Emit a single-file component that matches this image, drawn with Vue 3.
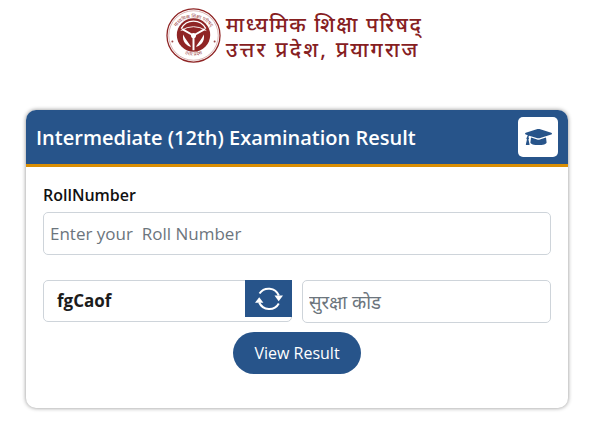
<script setup>
const title = 'Intermediate (12th) Examination Result'
</script>

<template>
  <div class="page">
    <header class="brand">
      <svg class="emblem" viewBox="0 0 56 56" width="55" height="55" aria-hidden="true">
        <defs>
          <path id="arcTop" d="M7 31 A21 21 0 1 1 49 31" />
          <path id="arcBottom" d="M13.5 43 A21.5 21.5 0 0 0 42.5 43" />
        </defs>
        <circle cx="28" cy="28" r="27" fill="#fff" stroke="#8f2525" stroke-width="1.3" />
        <circle cx="28" cy="28" r="25.2" fill="none" stroke="#b56a6a" stroke-width=".5" />
        <text class="ring-text"><textPath href="#arcTop" startOffset="50%" text-anchor="middle">माध्यमिक शिक्षा परिषद्</textPath></text>
        <text class="ring-text"><textPath href="#arcBottom" startOffset="50%" text-anchor="middle">उत्तर प्रदेश</textPath></text>
        <circle cx="6.5" cy="34" r="1" fill="#9c4545" />
        <circle cx="49.5" cy="34" r="1" fill="#9c4545" />
        <circle cx="28" cy="27.5" r="17" fill="#8f2525" />
        <path d="M15.5 21 A14 14 0 0 1 40.5 21" fill="none" stroke="#fff" stroke-width="1.4" />
        <path d="M15 23 Q28 15 41 23" fill="none" stroke="#fff" stroke-width=".9" />
        <path d="M28 28 L28 43 M28 28 L16.5 21.5 M28 28 L39.5 21.5" stroke="#fff" stroke-width="2" fill="none" />
        <circle cx="28" cy="28" r="2.6" fill="#fff" />
        <path d="M17.5 27 C19.5 32 23 35 25.6 39.5 C21.5 39 16 34.5 17.5 27 Z M38.5 27 C36.5 32 33 35 30.4 39.5 C34.5 39 40 34.5 38.5 27 Z" fill="#fff" />
      </svg>
      <div class="brand-text">
        <div>माध्यमिक शिक्षा परिषद्</div>
        <div class="brand-line2">उत्तर प्रदेश, प्रयागराज</div>
      </div>
    </header>

    <section class="card">
      <div class="card-head">
        <h1>{{ title }}</h1>
        <span class="cap-box">
          <svg viewBox="0 0 640 512" width="27" height="22" aria-hidden="true">
            <path fill="#27548a" d="M622.34 153.2L343.4 67.5c-15.2-4.67-31.6-4.67-46.79 0L17.66 153.2c-23.54 7.23-23.54 38.36 0 45.59l48.63 14.94c-10.67 13.19-17.23 29.28-17.88 46.9C38.78 266.15 32 276.11 32 288c0 10.78 5.68 19.85 13.86 25.65L20.33 428.53C18.11 438.52 25.71 448 35.94 448h56.11c10.24 0 17.84-9.48 15.62-19.47L82.14 313.65C90.32 307.85 96 298.78 96 288c0-11.57-6.47-21.25-15.66-26.87.76-15.02 8.44-28.3 20.69-36.72L296.6 284.5c9.06 2.78 26.44 6.25 46.79 0l278.95-85.7c23.55-7.24 23.55-38.36 0-45.6zM352.79 315.09c-28.53 8.76-52.84 3.92-65.59 0l-145.02-44.55L128 384c0 35.35 85.96 64 192 64s192-28.65 192-64l-14.18-113.47-145.03 44.56z" />
          </svg>
        </span>
      </div>

      <form class="card-body" @submit.prevent>
        <label class="field-label" for="roll">RollNumber</label>
        <input id="roll" class="input" type="text" placeholder="Enter your  Roll Number" />

        <div class="captcha-row">
          <div class="captcha">
            <span class="captcha-code">fgCaof</span>
            <button class="refresh" type="button" aria-label="Refresh">
              <svg viewBox="0 0 32 32" width="32" height="32" fill="none" aria-hidden="true">
                <path d="M6.5 10.5 A11 11 0 0 1 25.8 12.5" stroke="#fff" stroke-width="2" />
                <path d="M25.8 20.5 A11 11 0 0 1 6.2 19.5" stroke="#fff" stroke-width="2" />
                <path d="M21.5 12.6 L30 12.6 L25.7 18.2 Z" fill="#fff" />
                <path d="M2 19.8 L10.4 19.8 L6.2 14.2 Z" fill="#fff" />
              </svg>
            </button>
          </div>
          <input class="input security" type="text" placeholder="सुरक्षा कोड" />
        </div>

        <button class="submit" type="submit">View Result</button>
      </form>
    </section>
  </div>
</template>

<style>
html, body { margin: 0; background: #fff; }
</style>

<style scoped>
.page {
  box-sizing: border-box;
  width: 591px;
  height: 440px;
  padding: 7px 23px 0 26px;
  font-family: "Open Sans", "Noto Sans", sans-serif;
  overflow: hidden;
}
.brand {
  display: flex;
  justify-content: center;
  align-items: center;
  gap: 5px;
  height: 56px;
  padding-right: 6px;
}
.emblem { flex: none; }
.ring-text {
  font-family: "Noto Sans", "Open Sans", sans-serif;
  font-size: 5px;
  fill: #9c4545;
}
.brand-text {
  margin-top: 3px;
  color: #86201f;
  font-family: "Noto Sans", "Open Sans", sans-serif;
  font-size: 21px;
  font-weight: 500;
  line-height: 25px;
  letter-spacing: 1.5px;
  white-space: nowrap;
}
.brand-line2 { letter-spacing: 2.2px; }
.card {
  margin-top: 47px;
  height: 298px;
  box-sizing: border-box;
  border-radius: 10px;
  background: #fff;
  box-shadow: 0 0 4px rgba(0, 0, 0, .45);
  overflow: hidden;
}
.card-head {
  box-sizing: border-box;
  height: 57px;
  background: #27548a;
  border-bottom: 3px solid #d98e04;
  display: flex;
  align-items: center;
  justify-content: space-between;
  padding: 0 10px 0 10px;
}
h1 {
  margin: 0;
  color: #fff;
  font-size: 20px;
  font-weight: 600;
  white-space: nowrap;
}
.cap-box {
  width: 40px;
  height: 40px;
  background: #fff;
  border-radius: 5px;
  display: flex;
  align-items: center;
  justify-content: center;
}
.card-body {
  display: flex;
  flex-direction: column;
  padding: 18px 17px 0;
}
.field-label {
  color: #111;
  font-size: 16px;
  font-weight: 600;
  line-height: 21px;
  margin-bottom: 6px;
}
.input {
  box-sizing: border-box;
  height: 43px;
  width: 100%;
  border: 1px solid #ced4da;
  border-radius: 5px;
  padding: 0 6px;
  font: 17px "Open Sans", "Noto Sans", sans-serif;
  color: #495057;
  background: #fff;
  outline: none;
}
.input::placeholder { color: #6c757d; opacity: 1; }
.captcha-row {
  display: flex;
  align-items: flex-start;
  gap: 10px;
  margin-top: 25px;
}
.captcha {
  box-sizing: border-box;
  width: 249px;
  height: 42px;
  flex: none;
  display: flex;
  justify-content: space-between;
  border: 1px solid #ced4da;
  border-radius: 5px;
}
.captcha-code {
  padding-left: 13px;
  line-height: 40px;
  font-size: 17px;
  font-weight: 700;
  color: #1c1c1c;
}
.refresh {
  width: 47px;
  height: 37px;
  margin: -1px -1px 0 0;
  padding: 0;
  border: 0;
  background: #27548a;
  display: flex;
  align-items: center;
  justify-content: center;
}
.security { flex: 1; min-width: 0; width: auto; font-size: 18.5px; }
.submit {
  align-self: center;
  width: 128px;
  height: 42px;
  margin-top: 9px;
  border: 0;
  border-radius: 21px;
  background: #27548a;
  color: #fff;
  font: 16px "Open Sans", "Noto Sans", sans-serif;
  cursor: pointer;
}
</style>
